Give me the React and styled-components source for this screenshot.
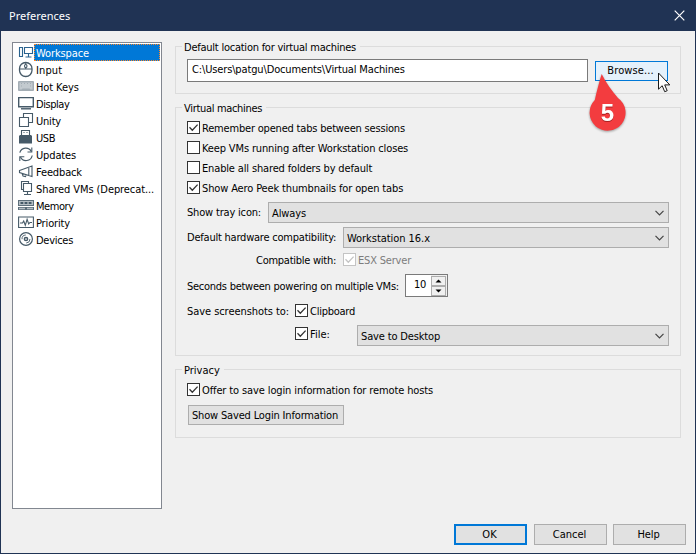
import React from 'react';
import styled, { createGlobalStyle, css } from 'styled-components';

const GlobalStyle = createGlobalStyle`
  * { box-sizing: border-box; }
  html, body { margin: 0; padding: 0; overflow: hidden; }
`;

const Window = styled.div`
  display: flex;
  flex-direction: column;
  width: 696px;
  height: 554px;
  background: #f0f0f0;
  border: 1px solid #203354;
  border-top: 0;
  color: #000;
  font: 11px/13px "DejaVu Sans Condensed", "DejaVu Sans", sans-serif;
  white-space: nowrap;
  position: relative;
`;

const TitleBar = styled.header`
  display: flex;
  align-items: center;
  justify-content: space-between;
  flex: none;
  height: 31px;
  padding: 0 10px 0 8px;
  background: #203354;
  color: #fff;
  font: 11px/15px "Noto Sans", sans-serif;
`;

const CloseIcon = styled.svg`
  width: 11px;
  height: 11px;
  margin-bottom: 1px;
  stroke: #fff;
  stroke-width: 1.2;
`;

const Body = styled.div`
  display: flex;
  gap: 13px;
  flex: 1;
  padding: 8px 14px 0 11px;
`;

const NavList = styled.nav`
  flex: none;
  width: 150px;
  height: 467px;
  margin-top: 3px;
  padding: 1px;
  background: #fff;
  border: 1px solid #828790;
`;

const NavItem = styled.div`
  display: flex;
  height: 17px;
  padding-left: 4px;
`;

const NavIcon = styled.svg`
  flex: none;
  width: 16px;
  height: 17px;
  fill: none;
  stroke: ${(p) => (p.$active ? '#2a638f' : '#465a68')};
  stroke-width: 1.1;
`;

const NavLabel = styled.span`
  flex: 1;
  padding: 2px 0 0 2px;
  line-height: 15px;
  letter-spacing: ${(p) => p.$track}px;
  ${(p) => p.$active && css`
    background: #0078d7;
    color: #fff;
    outline: 1px dotted #ff8728;
    outline-offset: -1px;
  `}
`;

const Panels = styled.main`
  display: flex;
  flex-direction: column;
  flex: 1;
`;

const Group = styled.fieldset`
  flex: none;
  height: ${(p) => p.$height}px;
  margin: 0 0 6px;
  padding: ${(p) => p.$top}px 11px 0;
  border: 1px solid #dcdcdc;
`;

const Legend = styled.legend`
  height: 15px;
  margin-left: -5px;
  padding: 0 4px 0 2px;
  line-height: 17px;
  letter-spacing: ${(p) => p.$track}px;
`;

const Text = styled.span`
  letter-spacing: ${(p) => p.$track}px;
`;

const CheckText = styled(Text)`
  padding-top: 2px;
`;

const Row = styled.div`
  display: flex;
  align-items: ${(p) => p.$align || 'center'};
  height: ${(p) => p.$height || 13}px;
  margin-top: ${(p) => p.$gap || 0}px;
  padding-left: ${(p) => p.$indent || 0}px;
`;

const FieldLabel = styled.label`
  flex: none;
  width: ${(p) => p.$width}px;
  letter-spacing: ${(p) => p.$track}px;
  padding-left: ${(p) => p.$indent || 0}px;
  padding-top: ${(p) => (p.$low ? 2 : 0)}px;
`;

const PathInput = styled.div`
  flex: none;
  width: 401px;
  height: 23px;
  margin-right: 7px;
  padding-left: 4px;
  background: #fff;
  border: 1px solid #7a7a7a;
  line-height: 19px;
  letter-spacing: -0.14px;
`;

const Button = styled.button`
  width: ${(p) => p.$width || 73}px;
  height: ${(p) => p.$height || 21}px;
  margin: 0;
  padding: 0 2px 0 0;
  border: 1px solid #adadad;
  background: #e1e1e1;
  color: #000;
  font: inherit;
  letter-spacing: ${(p) => p.$track || 0}px;
  ${(p) => p.$primary && css`border: 2px solid #0078d7;`}
  ${(p) => p.$hover && css`border-color: #0078d7; background: #e5f1fb;`}
`;

const CheckLabel = styled.label`
  display: flex;
  align-items: center;
  gap: 2px;
  height: 13px;
  margin-top: ${(p) => p.$drop || 0}px;
  width: ${(p) => (p.$width ? `${p.$width}px` : 'auto')};
  color: ${(p) => (p.$disabled ? '#7c7c7c' : '#000')};
`;

const CheckBox = styled.svg`
  flex: none;
  width: 13px;
  height: 13px;
  fill: #fff;
  stroke: ${(p) => (p.$disabled ? '#c4c4c4' : '#333')};
`;

const SelectBox = styled.div`
  display: flex;
  align-items: center;
  justify-content: space-between;
  flex: none;
  width: ${(p) => p.$width}px;
  height: 21px;
  padding: 1px 4px 0 3px;
  background: #e1e1e1;
  border: 1px solid #adadad;
`;

const Chevron = styled.svg`
  width: 9px;
  height: 6px;
  margin-bottom: 1px;
  fill: none;
  stroke: #444;
  stroke-width: 1.2;
`;

const Spinner = styled.div`
  display: flex;
  width: 43px;
  height: 23px;
  background: #fff;
  border: 1px solid #7a7a7a;
`;

const SpinValue = styled.span`
  width: 25px;
  padding-right: 5px;
  text-align: right;
  line-height: 19px;
  letter-spacing: -0.3px;
`;

const SpinButtons = styled.div`
  display: grid;
  flex: 1;
  grid-template-rows: 10px 10px;
  gap: 0;
  padding: 1px 1px 0 0;
  background: #f0f0f0;
`;

const SpinButton = styled.svg`
  width: 15px;
  height: 10px;
  background: #f0f0f0;
  border: 1px solid #adadad;
`;

const Footer = styled.footer`
  display: flex;
  justify-content: flex-end;
  gap: 6px;
  flex: none;
  height: 29px;
  padding-right: 9px;
`;

const OkSlot = styled.div`
  margin-right: 1px;
`;

const Callout = styled.svg`
  position: absolute;
  left: 583px;
  top: 70px;
  width: 50px;
  height: 68px;
  overflow: visible;
  filter: drop-shadow(0 1px 0.8px rgba(0, 0, 0, 0.35));
`;

const CalloutNumber = styled.text`
  font: bold 24px "Liberation Sans", sans-serif;
  fill: #fff;
  text-anchor: middle;
  filter: drop-shadow(0.5px 1px 0.5px rgba(80, 0, 0, 0.45));
`;

const Cursor = styled.svg`
  position: absolute;
  left: 657px;
  top: 72px;
  width: 13px;
  height: 21px;
`;

const icons = {
  workspace: <><path d="M1.5 3.5h3v9h-3zM6.5 3.5h8v6h-8zM10.5 10v2.5M7.5 13h6" /></>,
  input: <><rect x="1.5" y="1.5" width="12.5" height="14" rx="6.2" strokeWidth="1.3" /><path d="M1.5 8h12.5M7.75 1.5v2M7.75 6v2" /><rect x="6.6" y="3.5" width="2.3" height="3" rx="1" /></>,
  keys: <><rect x="0" y="3" width="16" height="10" rx="1" fill="#a3adb4" stroke="none" /><path d="M1.5 4.5h13v7h-2l-1-1h-7l-1 1h-2z" fill="#c3cacf" stroke="none" /><path d="M3 5.5h1M6 5.5h1M9 5.5h1M12 5.5h1M3 8h1M12 8h1" stroke="#a3adb4" strokeWidth="1" /></>,
  display: <><path d="M.7 2.6h14.6v9.2H.7z" strokeWidth="1.4" /><path d="M3 13.8h10" strokeWidth="1.4" /></>,
  unity: <path d="M1.5 5.5h9v9h-9zM5.5 5V1.5h9v9H11" />,
  usb: <><path d="M3.5 6V1.5h8V6" /><path d="M1 7l1-1h11l1 1v7.5H1z" fill="#465a68" stroke="none" /><path d="M5.5 3.5h1M8.5 3.5h1" /></>,
  updates: <><path d="M1.8 6.7A6.2 6.2 0 0 1 13.3 5.5M14.2 9.5A6.2 6.2 0 0 1 2.5 11" strokeWidth="1.2" /><path d="M13.8 1.5v4.5H9.5M1.8 15v-4.3h4.5" /></>,
  feedback: <path d="M1.5 7.5L14 3v10.5L1.5 9.5zM4 10.3L5 13l2.5.5.8-2M10.8 4.3v8.2" />,
  shared: <path d="M5.5 9.5h-2v-8h7v2M5.5 3.5h8v8h-8zM9.5 11.5v3M6 14.5h7" />,
  memory: <><path d="M0 3h16v6H0zM0 10h16v3H0z" fill="#5c6e7a" stroke="none" /><path d="M1 4h14v4H1zM1 10.8h6v1.4H1zM9 10.8h6v1.4H9z" fill="#b4bdc3" stroke="none" /><path d="M2.5 6h2.8M6.6 6h2.8M10.7 6h2.8" strokeWidth="2" /></>,
  priority: <path d="M.6 3h14.8v10.5H.6zM2 9h2.5l1.2-2 1.6 4.3 1.8-6 1.6 4.6L12 8.5h2" />,
  devices: <><circle cx="8" cy="8" r="6.4" strokeWidth="1.2" /><circle cx="8" cy="8" r="1.6" strokeWidth="1.5" /><path d="M4 8.2A4 4 0 0 1 7.8 4M12 8A4 4 0 0 1 8.2 12" strokeWidth=".9" /></>,
};

const navItems = [
  ['workspace', 'Workspace', -0.11],
  ['input', 'Input', 0.1],
  ['keys', 'Hot Keys', -0.1],
  ['display', 'Display', -0.45],
  ['unity', 'Unity', -0.2],
  ['usb', 'USB', -0.4],
  ['updates', 'Updates', -0.14],
  ['feedback', 'Feedback', -0.14],
  ['shared', 'Shared VMs (Deprecat...', -0.09],
  ['memory', 'Memory', -0.45],
  ['priority', 'Priority', -0.15],
  ['devices', 'Devices', -0.28],
];

function Check({ label, track, checked, disabled, width, drop }) {
  return (
    <CheckLabel $disabled={disabled} $width={width} $drop={drop}>
      <CheckBox $disabled={disabled} viewBox="0 0 13 13">
        <rect x=".5" y=".5" width="12" height="12" />
        {checked && <path d="M2.5 6.3l2.8 2.9 5.3-5.6" fill="none" strokeWidth="1.3" />}
      </CheckBox>
      <CheckText $track={track}>{label}</CheckText>
    </CheckLabel>
  );
}

function Select({ width, value, track }) {
  return (
    <SelectBox $width={width}>
      <Text $track={track}>{value}</Text>
      <Chevron viewBox="0 0 9 6"><path d="M.5 .8l4 4 4-4" /></Chevron>
    </SelectBox>
  );
}

export default function App() {
  return (
    <>
      <GlobalStyle />
      <Window>
        <TitleBar>
          <span>Preferences</span>
          <CloseIcon viewBox="0 0 11 11"><path d="M.7 .7l9.6 9.6M10.3 .7L.7 10.3" /></CloseIcon>
        </TitleBar>
        <Body>
          <NavList>
            {navItems.map(([icon, label, track], i) => (
              <NavItem key={icon}>
                <NavIcon $active={i === 0} viewBox="0 0 16 17">{icons[icon]}</NavIcon>
                <NavLabel $active={i === 0} $track={track}>{label}</NavLabel>
              </NavItem>
            ))}
          </NavList>
          <Panels>
            <Group $height={55} $top={5}>
              <Legend $track={-0.24}>Default location for virtual machines</Legend>
              <Row $height={23}>
                <PathInput>C:\Users\patgu\Documents\Virtual Machines</PathInput>
                <Button $height={20} $hover $track={0.1}>Browse...</Button>
              </Row>
            </Group>
            <Group $height={256} $top={6}>
              <Legend $track={-0.32}>Virtual machines</Legend>
              <Row><Check checked label="Remember opened tabs between sessions" track={-0.19} /></Row>
              <Row $gap={7}><Check label="Keep VMs running after Workstation closes" track={-0.14} /></Row>
              <Row $gap={7}><Check label="Enable all shared folders by default" track={-0.15} /></Row>
              <Row $gap={7}><Check checked label="Show Aero Peek thumbnails for open tabs" track={-0.14} /></Row>
              <Row $gap={8} $height={21}>
                <FieldLabel $width={81} $track={-0.18}>Show tray icon:</FieldLabel>
                <Select width={401} value="Always" track={-0.1} />
              </Row>
              <Row $gap={4} $height={21}>
                <FieldLabel $width={156} $track={-0.22}>Default hardware compatibility:</FieldLabel>
                <Select width={326} value="Workstation 16.x" track={-0.05} />
              </Row>
              <Row $gap={5}>
                <FieldLabel $low $width={156} $indent={69} $track={-0.26}>Compatible with:</FieldLabel>
                <Check checked disabled label="ESX Server" track={-0.19} />
              </Row>
              <Row $gap={8} $height={23}>
                <FieldLabel $low $width={218} $track={-0.26}>Seconds between powering on multiple VMs:</FieldLabel>
                <Spinner>
                  <SpinValue>10</SpinValue>
                  <SpinButtons>
                    <SpinButton viewBox="0 0 13 8"><path d="M3.5 5.5h6l-3-3z" /></SpinButton>
                    <SpinButton viewBox="0 0 13 8"><path d="M3.5 2.5h6l-3 3z" /></SpinButton>
                  </SpinButtons>
                </Spinner>
              </Row>
              <Row $gap={7}>
                <FieldLabel $low $width={108} $track={-0.06}>Save screenshots to:</FieldLabel>
                <Check checked label="Clipboard" track={-0.25} />
              </Row>
              <Row $gap={8} $height={21} $indent={108} $align="flex-start">
                <Check checked label="File:" track={0} width={62} drop={2} />
                <Select width={312} value="Save to Desktop" track={-0.15} />
              </Row>
            </Group>
            <Group $height={76} $top={6}>
              <Legend $track={0}>Privacy</Legend>
              <Row><Check checked label="Offer to save login information for remote hosts" track={-0.12} /></Row>
              <Row $gap={9} $height={20} $indent={1}>
                <Button $width={156} $height={20} $track={-0.16}>Show Saved Login Information</Button>
              </Row>
            </Group>
          </Panels>
        </Body>
        <Footer>
          <OkSlot><Button $primary $track={0.2}>OK</Button></OkSlot>
          <Button>Cancel</Button>
          <Button $track={-0.1}>Help</Button>
        </Footer>
        <Callout viewBox="0 0 50 68">
          <path d="M17.7 4C15.5 11 13 20 10.8 30A18 18 0 1 0 34 28C28 21 22 13 17.7 4z" fill="#f33c3f" />
          <CalloutNumber x="23.5" y="51">5</CalloutNumber>
        </Callout>
        <Cursor viewBox="0 0 13 21">
          <path d="M.5 1v16.2l3.7-3.5 2.5 6 2.5-1-2.5-5.8h5.1z" fill="#fff" stroke="#1a1a1a" />
        </Cursor>
      </Window>
    </>
  );
}
